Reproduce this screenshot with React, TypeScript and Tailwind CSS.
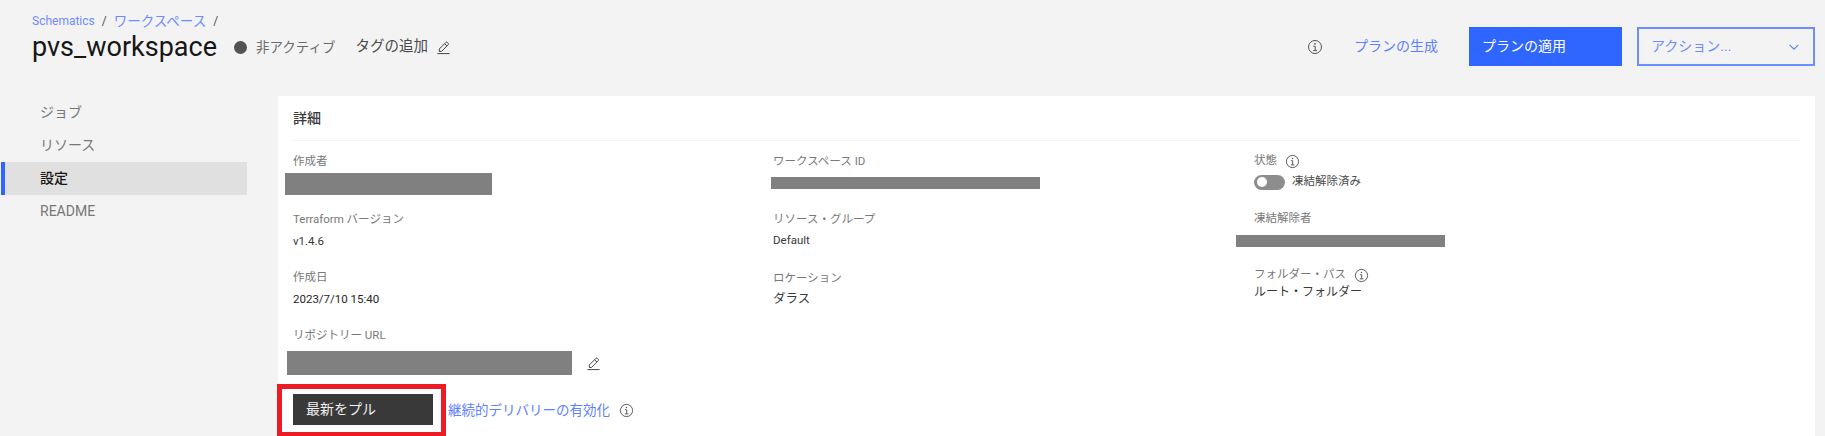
import React from 'react'

const FONT = { fontFamily: 'Roboto, "Noto Sans CJK JP", sans-serif' }

/* ---------- Carbon-style icons ---------- */
function InfoIcon({ className = '' }: { className?: string }) {
  return (
    <svg viewBox="0 0 16 16" className={`w-[15px] h-[15px] shrink-0 ${className}`} fill="none" stroke="#525252">
      <circle cx="8" cy="8" r="6.5" strokeWidth="1" />
      <path d="M6.3 7.2H8.2V11.6M6.2 11.6H10" strokeWidth="1" />
      <circle cx="8" cy="4.9" r="0.8" fill="#525252" stroke="none" />
    </svg>
  )
}

function EditIcon({ className = '' }: { className?: string }) {
  return (
    <svg viewBox="0 0 16 16" className={`w-[15px] h-[15px] shrink-0 ${className}`} fill="none" stroke="#393939" strokeWidth="1">
      <path d="M1.5 14.5H14.5" />
      <path d="M3.5 12.2V9.6L10.6 2.5A1 1 0 0 1 12 2.5L13 3.5A1 1 0 0 1 13 4.9L5.9 12.2Z" />
      <path d="M9.2 4L11.6 6.4" />
    </svg>
  )
}

function Field({ label, info, className = '', children }: { label: string; info?: boolean; className?: string; children: React.ReactNode }) {
  return (
    <div className={className}>
      <div className="flex items-center gap-[8px] h-[16px] text-[11.5px] text-[#787878]">
        {label}
        {info && <InfoIcon />}
      </div>
      {children}
    </div>
  )
}

const Redacted = ({ className }: { className: string }) => <div className={`bg-[#808080] ${className}`} />

const navItems = ['ジョブ', 'リソース', '設定', 'README']

export default function App() {
  return (
    <div className="h-[436px] overflow-hidden bg-[#f3f3f3] text-[#161616]" style={FONT}>
      {/* Header */}
      <header className="h-[96px] flex justify-between pl-[32px] pr-[10px]">
        <div className="pt-[12px]">
          <div className="flex items-center gap-[7px] h-[18px] text-[12px] text-[#6f8bff]">
            <span>Schematics</span>
            <span className="text-[#525252]">/</span>
            <span className="text-[13.5px]">ワークスペース</span>
            <span className="text-[#525252]">/</span>
          </div>
          <div className="flex items-center h-[36px] mt-[-1px]">
            <h1 className="text-[27px] leading-[36px] font-normal">pvs_workspace</h1>
            <span className="ml-[17px] w-[13px] h-[13px] rounded-full bg-[#525252]" />
            <span className="ml-[9px] text-[13.5px] text-[#6a6a6a]">非アクティブ</span>
            <span className="ml-[20px] text-[14.5px] text-[#4a4a4a]">タグの追加</span>
            <EditIcon className="ml-[8px]" />
          </div>
        </div>
        <div className="flex items-start pt-[27px]">
          <InfoIcon className="mt-[12px] w-[16px] h-[16px]" />
          <a className="ml-[31px] h-[39px] flex items-center text-[14px] text-[#6080ff]">プランの生成</a>
          <button className="ml-[31px] w-[153px] h-[39px] bg-[#2f66ff] text-white text-[14px] text-left pl-[13px]">プランの適用</button>
          <button className="ml-[15px] w-[178px] h-[39px] border-2 border-[#6b8fff] text-[#6f8bff] text-[14px] flex items-center justify-between pl-[12px] pr-[12px]">
            アクション...
            <svg viewBox="0 0 16 16" className="w-[14px] h-[14px]" fill="none" stroke="#5b7cff" strokeWidth="1.2">
              <path d="M3 5.5L8 10.5L13 5.5" />
            </svg>
          </button>
        </div>
      </header>

      <div className="flex pr-[10px]">
        {/* Side nav */}
        <nav className="w-[278px] shrink-0 pl-[1px]">
          {navItems.map((item) => (
            <div
              key={item}
              className={
                item === '設定'
                  ? 'w-[246px] h-[33px] flex items-center pl-[35px] border-l-[4px] border-[#2f66ff] bg-[#e0e0e0] text-[14px] font-medium text-[#161616]'
                  : 'w-[246px] h-[33px] flex items-center pl-[39px] text-[14px] text-[#777777]'
              }
            >
              {item}
            </div>
          ))}
        </nav>

        {/* Details card */}
        <main className="flex-1 h-[340px] bg-white px-[15px]">
          <div className="h-[45px] flex items-center border-b border-[#f4f4f4] text-[14px] font-medium text-[#393939]">詳細</div>

          <div className="grid grid-cols-[480px_481px_1fr] pt-[13px]">
            <div>
              <Field label="作成者">
                <Redacted className="w-[207px] h-[22px] ml-[-8px] mt-[3px]" />
              </Field>
              <Field label="Terraform バージョン" className="mt-[17px]">
                <div className="mt-[5px] h-[16px] text-[11.5px] leading-[16px] text-[#393939]">v1.4.6</div>
              </Field>
              <Field label="作成日" className="mt-[21px]">
                <div className="mt-[5px] h-[16px] text-[11.5px] leading-[16px] text-[#262626]">2023/7/10 15:40</div>
              </Field>
            </div>

            <div>
              <Field label="ワークスペース ID">
                <Redacted className="w-[269px] h-[12px] ml-[-2px] mt-[7px]" />
              </Field>
              <Field label="リソース・グループ" className="mt-[23px]">
                <div className="mt-[4px] h-[16px] text-[11.5px] leading-[16px] text-[#393939]">Default</div>
              </Field>
              <Field label="ロケーション" className="mt-[23px]">
                <div className="mt-[4px] h-[16px] text-[12.5px] leading-[16px] text-[#393939]">ダラス</div>
              </Field>
            </div>

            <div className="mt-[-1px]">
              <Field label="状態" info>
                <div className="flex items-center gap-[7px] mt-[5px] h-[16px]">
                  <div className="relative w-[31px] h-[15px] rounded-full bg-[#8d8d8d]">
                    <span className="absolute left-[3px] top-[2.5px] w-[10px] h-[10px] rounded-full bg-white" />
                  </div>
                  <span className="text-[11.5px] text-[#4a4a4a]">凍結解除済み</span>
                </div>
              </Field>
              <Field label="凍結解除者" className="mt-[21px]">
                <Redacted className="w-[209px] h-[12px] ml-[-18px] mt-[8px]" />
              </Field>
              <Field label="フォルダー・パス" info className="mt-[20px]">
                <div className="mt-[0px] h-[18px] text-[12px] leading-[18px] text-[#393939]">ルート・フォルダー</div>
              </Field>
            </div>
          </div>

          <Field label="リポジトリー URL" className="mt-[21px]">
            <div className="flex items-center mt-[7px]">
              <Redacted className="w-[285px] h-[24px] ml-[-6px]" />
              <EditIcon className="ml-[14px]" />
            </div>
          </Field>

          <div className="flex items-center mt-[9px]">
            <div className="ml-[-16px] border-[5px] border-[#ed1c24] pt-[5px] pb-[7px] pl-[11px] pr-[8px]">
              <button className="w-[140px] h-[31px] bg-[#393939] text-[#f0f0f0] text-[14px] text-left pl-[13px]">最新をプル</button>
            </div>
            <a className="ml-[2px] text-[13.5px] text-[#6080ff]">継続的デリバリーの有効化</a>
            <InfoIcon className="ml-[9px]" />
          </div>
        </main>
      </div>
    </div>
  )
}
